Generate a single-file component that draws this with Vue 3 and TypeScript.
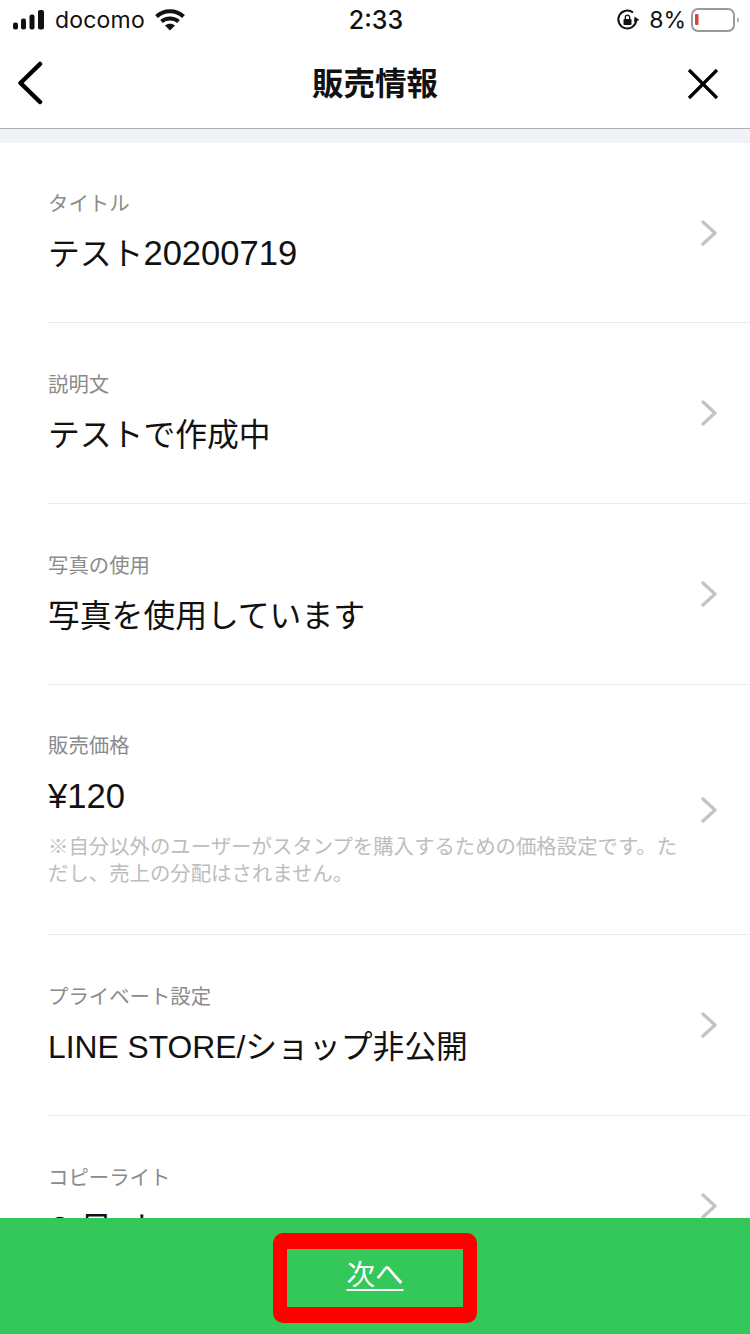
<script setup lang="ts">
interface Row {
  label: string
  value: string
  num?: string
  note?: string
}

const rows: Row[] = [
  { label: 'タイトル', value: 'テスト', num: '20200719' },
  { label: '説明文', value: 'テストで作成中' },
  { label: '写真の使用', value: '写真を使用しています' },
  {
    label: '販売価格',
    value: '',
    num: '¥120',
    note: '※自分以外のユーザーがスタンプを購入するための価格設定です。ただし、売上の分配はされません。',
  },
  { label: 'プライベート設定', value: 'LINE STORE/ショップ非公開' },
  // only the top of this value shows above the green bar
  { label: 'コピーライト', value: '© 日\u00a0\u00a0ト' },
]
</script>

<template>
  <div class="screen">
    <div class="status">
      <div class="status-left">
        <svg class="signal" width="36" height="20" viewBox="0 0 36 20">
          <rect x="0" y="12.500" width="5" height="7" rx="2" fill="#111" />
          <rect x="8" y="8.500" width="5" height="11" rx="2" fill="#111" />
          <rect x="16.500" y="4.500" width="5" height="15" rx="2" fill="#111" />
          <rect x="25" y="0" width="6" height="19.500" rx="2" fill="#111" />
        </svg>
        <span class="carrier">docomo</span>
        <svg class="wifi" width="30" height="22" viewBox="0 0 30 22">
          <path d="M1.500 7.500C9 0.500 21 0.500 28.500 7.500" fill="none" stroke="#111" stroke-width="4" />
          <path d="M6.500 12.500C11 8.500 19 8.500 23.500 12.500" fill="none" stroke="#111" stroke-width="4" />
          <path d="M10 16.500C13 14.200 17 14.200 20 16.500L15 21.500Z" fill="#111" />
        </svg>
      </div>
      <div class="time">2:33</div>
      <div class="status-right">
        <svg class="rotate-lock" width="24" height="24" viewBox="0 0 24 24">
          <path d="M20.300 12A9 9 0 1 1 17 4.500" fill="none" stroke="#111" stroke-width="2" />
          <path d="M18.500 8.500L23.500 12L18 14Z" fill="#111" />
          <rect x="7.500" y="11" width="8" height="6" rx="1" fill="#111" />
          <path d="M9.300 11V9.300a2.200 2.200 0 0 1 4.400 0V11" fill="none" stroke="#111" stroke-width="1.300" />
        </svg>
        <span class="percent">8%</span>
        <svg width="48" height="24" viewBox="0 0 48 24">
          <rect x="1" y="1" width="42" height="22" rx="6" fill="none" stroke="#9a9a9a" stroke-width="2" />
          <rect x="4" y="6" width="3.500" height="11" rx="1" fill="#d9413b" />
          <path d="M46 9.500a2.500 2.500 0 0 1 0 5Z" fill="#b5b5b5" />
        </svg>
      </div>
    </div>

    <header class="nav">
      <svg class="nav-back" width="28" height="44" viewBox="0 0 28 44">
        <path d="M24 3L4.500 22L24 41" fill="none" stroke="#000" stroke-width="4.500" stroke-linecap="round" stroke-linejoin="round" />
      </svg>
      <h1 class="nav-title">販売情報</h1>
      <svg class="nav-close" width="32" height="32" viewBox="0 0 32 32">
        <path d="M2 2L30 30M30 2L2 30" fill="none" stroke="#000" stroke-width="3.200" />
      </svg>
    </header>

    <div class="band"></div>

    <div class="list">
      <div v-for="row in rows" :key="row.label" class="row" :class="{ 'has-note': row.note }">
        <div class="row-body">
          <div class="label">{{ row.label }}</div>
          <div class="value">{{ row.value }}<span v-if="row.num" class="num">{{ row.num }}</span></div>
          <div v-if="row.note" class="note">{{ row.note }}</div>
        </div>
        <svg class="chevron" width="16" height="26" viewBox="0 0 16 26">
          <path d="M2 2L14 13L2 24" fill="none" stroke="#c4c4c4" stroke-width="3.400" stroke-linecap="round" stroke-linejoin="round" />
        </svg>
      </div>
    </div>

    <div class="footer">
      <a class="next">次へ</a>
    </div>
  </div>
</template>

<style>
html,
body {
  margin: 0;
  background: #fff;
}
</style>

<style scoped>
.screen {
  position: relative;
  width: 750px;
  height: 1334px;
  overflow: hidden;
  background: #fff;
  font-family: "Liberation Sans", "Noto Sans CJK JP", sans-serif;
  color: #111;
}

.status {
  height: 40px;
  display: grid;
  grid-template-columns: 1fr auto 1fr;
  align-items: center;
  padding: 0 11px 0 13px;
}

.status-left,
.status-right {
  display: flex;
  align-items: center;
}

.status-right {
  justify-content: flex-end;
  gap: 5px;
}

.rotate-lock {
  margin-right: 4px;
}

.carrier {
  margin-left: 6px;
  font-family: "Inter", "Liberation Sans", sans-serif;
  font-size: 23px;
  letter-spacing: 0.2px;
}

.wifi {
  margin-left: 10px;
}

.time {
  font-family: "Inter", "Liberation Sans", sans-serif;
  font-size: 25px;
  font-weight: 500;
}

.percent {
  font-family: "Inter", "Liberation Sans", sans-serif;
  font-size: 23px;
}

.nav {
  height: 88px;
  display: grid;
  grid-template-columns: 1fr auto 1fr;
  align-items: center;
  padding: 0 31px;
  border-bottom: 1px solid #b0b0b8;
}

.nav-back {
  margin: -2px 0 0 -15px;
}

.nav-title {
  margin: -6px 0 0;
  font-size: 31.5px;
  font-weight: 700;
  color: #111;
}

.nav-close {
  justify-self: end;
}

.band {
  height: 14px;
  background: #f1f2f6;
}

.row {
  height: 180px;
  margin-left: 48px;
  padding-right: 33px;
  display: flex;
  align-items: center;
  justify-content: space-between;
  border-bottom: 1px solid #ececec;
}

.row:first-child {
  height: 179px;
}

.row:first-child .value {
  margin-top: 12px;
}

.row.has-note {
  height: 249px;
}

.row-body {
  width: 640px;
}

.label {
  font-size: 20.4px;
  line-height: 30px;
  color: #8b8b8b;
}

.value {
  margin-top: 13px;
  font-size: 31.8px;
  line-height: 44px;
  color: #111;
}

.num {
  font-size: 34.6px;
}

.note {
  margin-top: 15px;
  font-size: 20.4px;
  line-height: 27px;
  color: #bdbdbd;
}

.footer {
  box-sizing: border-box;
  position: absolute;
  left: 0;
  right: 0;
  bottom: 0;
  height: 116px;
  padding-top: 4px;
  display: flex;
  align-items: center;
  justify-content: center;
  background: #34c759;
}

.next {
  box-sizing: border-box;
  width: 204px;
  height: 90px;
  padding-bottom: 12px;
  display: flex;
  align-items: center;
  justify-content: center;
  border: solid #ff0000;
  border-width: 16px 14px;
  border-radius: 10px;
  color: #fff;
  font-size: 28.5px;
  text-decoration: underline;
  text-underline-offset: 4px;
}
</style>
